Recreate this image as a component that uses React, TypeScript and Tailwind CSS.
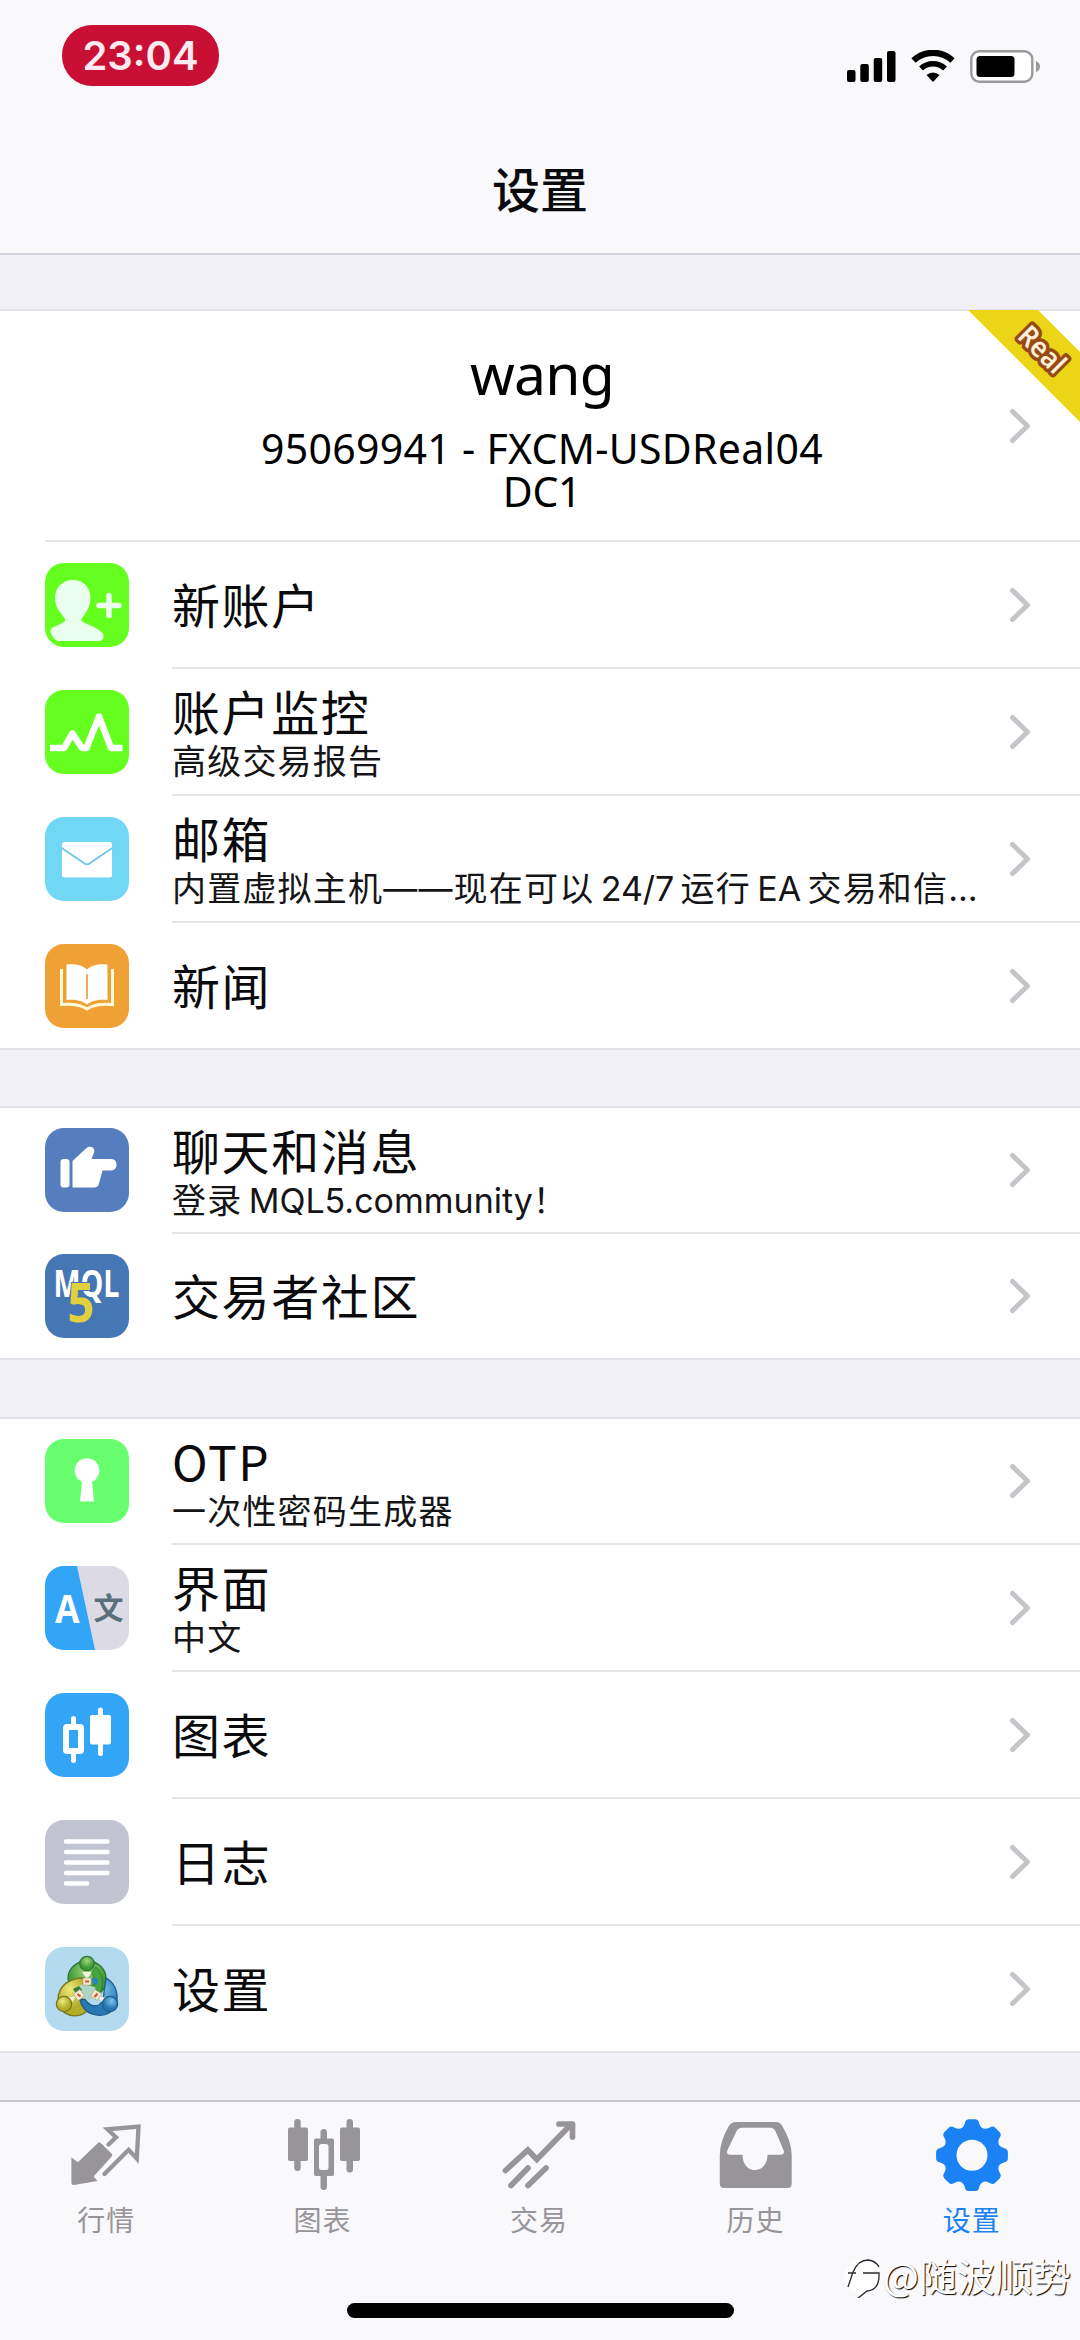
import { ReactNode } from "react";

type RowItem = {
  title: string;
  sub?: ReactNode;
  icon: ReactNode;
  height: string;
}

const Tile = ({ color, children }: { color: string; children: ReactNode }) => (
  <svg className="mb-[2px] w-[84px] h-[84px] shrink-0 rounded-[19px]" viewBox="0 0 84 84">
    <rect width="84" height="84" fill={color} />
    {children}
  </svg>
)

const Chevron = () => (
  <svg className="w-[22px] h-[36px] shrink-0" viewBox="0 0 22 36" fill="none" stroke="#c5c4c8" strokeWidth="5" strokeLinecap="round" strokeLinejoin="round">
    <path d="M3.500 3.500L18.500 18L3.500 32.500" />
  </svg>
)

const NewAccountIcon = () => (
  <Tile color="#64ff1e">
    <g fill="#ebffee">
      <path d="M28 17c10.500 0 17.500 7.500 17.500 18 0 8.500-4 14-8.500 20-1 1.500-1 2.500 0 3.500 4 2.500 21.500 8 21.500 14.500 0 3-2 5-5 5H14C9 78 5.500 71 5.500 67.500 5.500 64 15 62 19.500 58.500c1-1 1-2 0-3.500C14.500 49 10 43.500 10 35c0-10.500 7.500-18 18-18z" />
    </g>
    <path d="M64 32.500v20M54 42.500h20" stroke="#ebffee" strokeWidth="5.500" strokeLinecap="round" />
  </Tile>
)

const MonitorIcon = () => (
  <Tile color="#64ff1e">
    <path d="M5 58h14l8.500-14.500L37 58h4.500L54 26.500 66 58h11.500" fill="none" stroke="#fff" strokeWidth="6.500" strokeLinejoin="round" />
  </Tile>
)

const MailIcon = () => (
  <Tile color="#70d7f5">
    <rect x="17" y="25" width="50" height="35.500" rx="2.500" fill="#fff" />
    <path d="M16 30.500L39.500 46.500Q42 48.200 44.500 46.500L68 30.500" fill="none" stroke="#70c8e6" strokeWidth="2" />
  </Tile>
)

const NewsIcon = () => (
  <Tile color="#f0a135">
    <path d="M16.500 25v35.500c10-1 20 .5 25.500 4.500 5.500-4 15.500-5.500 25.500-4.500V25" fill="none" stroke="#fffbd8" strokeWidth="3" />
    <path d="M21.500 20.500c8-1 16 .5 20.500 5 4.500-4.500 12.500-6 20.500-5V56c-8-1-16 .5-20.500 4.500C37.500 56.500 29.500 55 21.500 56z" fill="#fff" />
    <path d="M42 30v25" stroke="#e8ae64" strokeWidth="2" />
  </Tile>
)

const ChatIcon = () => (
  <Tile color="#567dbe">
    <g fill="#fff">
      <rect x="15.500" y="31" width="9" height="28.500" rx="3" />
      <path d="M27.500 33L41 20.500c4-4 10-.5 8 4L46.500 31H66c7.500 0 7.500 11.500 0 11.500h-8.500l-3.500 13c-.8 3-2.500 4-5 4H27.500z" />
    </g>
  </Tile>
)

const MqlIcon = () => (
  <Tile color="#4577b5">
    <text x="8.500" y="42.500" textLength="66" lengthAdjust="spacingAndGlyphs" fontSize="37" fontWeight="700" fontFamily="Open Sans, sans-serif" fill="#fff">MQL</text>
    <text x="22.500" y="67.500" textLength="27" lengthAdjust="spacingAndGlyphs" fontSize="53" fontWeight="700" fontFamily="Open Sans, sans-serif" fill="#e3d03f" stroke="#4577b5" strokeWidth="2" paintOrder="stroke">5</text>
  </Tile>
)

const OtpIcon = () => (
  <Tile color="#68ff6e">
    <circle cx="42" cy="31.500" r="12.300" fill="#fff" />
    <path d="M37.500 38h9L49 62.500H35z" fill="#fff" />
  </Tile>
)

const LanguageIcon = () => (
  <Tile color="#dcdbe5">
    <path d="M0 0h32l18 84H0z" fill="#32a5f6" />
    <text x="10" y="57" textLength="24.500" lengthAdjust="spacingAndGlyphs" fontSize="39" fontWeight="700" fontFamily="Open Sans, sans-serif" fill="#fff">A</text>
    <text x="48.500" y="53" fontSize="30" fontWeight="700" fontFamily="Noto Sans CJK SC, sans-serif" fill="#5b6f7a">文</text>
  </Tile>
)

const ChartIcon = () => (
  <Tile color="#32a5f6">
    <g stroke="#fff" strokeWidth="5" strokeLinecap="round">
      <path d="M28.500 25.500v8M28.500 58v9.500M55.500 17v8M55.500 50v10.500" />
    </g>
    <rect x="21" y="34" width="15" height="24" rx="1" fill="none" stroke="#fff" strokeWidth="6" />
    <rect x="45" y="22" width="21" height="29.500" rx="2" fill="#fff" />
  </Tile>
)

const LogIcon = () => (
  <Tile color="#c3c4d2">
    <path d="M21 21.500h41.500M21 32h41.500M21 42.500h41.500M21 53h41.500M21 63.500h21" stroke="#fff" strokeWidth="4.500" strokeLinecap="round" />
  </Tile>
)

const MetaTraderIcon = () => (
  <Tile color="#b3daef">
    <defs>
      <radialGradient id="mtGreen" cx=".5" cy=".3"><stop offset="0" stopColor="#a2d884" /><stop offset="1" stopColor="#3d9a34" /></radialGradient>
      <radialGradient id="mtYellow" cx=".4" cy=".3"><stop offset="0" stopColor="#ecec7c" /><stop offset="1" stopColor="#b4ad28" /></radialGradient>
      <radialGradient id="mtBlue" cx=".6" cy=".3"><stop offset="0" stopColor="#7cc4ea" /><stop offset="1" stopColor="#2878b4" /></radialGradient>
    </defs>
    <path d="M23 31a19 17 0 0 1 38 0c0 8-3 14-9 17L40 44 24 36z" fill="url(#mtGreen)" stroke="#2f7430" strokeWidth="1.300" />
    <path d="M39 31C25 31 13 38 13 53c0 12 12 18 22 15 4-1 7-3 7-6l-5-12-2-9c1-3 5-4 8-3z" fill="url(#mtYellow)" stroke="#77751f" strokeWidth="1.300" />
    <path d="M61 31c8 4 12 13 11 23-2 12-14 17-25 13-6-2-11-8-12-14l5-1c3 6 9 8 14 6 4-3 5-8 5-13z" fill="url(#mtBlue)" stroke="#1f5b88" strokeWidth="1.300" />
    <path d="M51 20c8 7 8 20 3 29l-7-6c4-6 3-13-1-17z" fill="#47a53b" stroke="#2f7430" strokeWidth=".8" />
    <path d="M30 41l8-4 12 3 2 8-8 5-11-3z" fill="#aed4c5" />
    <path d="M28 42l6-3 3 4-5 5z" fill="#367f35" />
    <path d="M47 31h6v7l-5-1z" fill="#2e84b8" />
    <path d="M37 25l5 7 5-7M22 51l9-2-5 8M62 51l-9-2 5 8" fill="#f3f5df" />
    <g fill="#f6ead5" stroke="#a99e82" strokeWidth=".6">
      <rect x="38" y="31" width="8" height="7" />
      <rect x="30" y="44" width="8" height="8" transform="rotate(-35 34 48)" />
      <rect x="47" y="44" width="8" height="8" transform="rotate(30 51 48)" />
    </g>
    <path d="M40 34.500h4M32.500 47l3 2.500M49.500 50l3-3.500" stroke="#d2562c" strokeWidth="2.200" />
    <circle cx="42" cy="16.500" r="7.200" fill="url(#mtGreen)" stroke="#2f7430" strokeWidth="1.300" />
    <circle cx="19" cy="57" r="7.600" fill="url(#mtYellow)" stroke="#77751f" strokeWidth="1.300" />
    <circle cx="65" cy="57" r="7.600" fill="url(#mtBlue)" stroke="#1f5b88" strokeWidth="1.300" />
  </Tile>
)

// latin words sit tighter than the chinese around them
const Latin = ({ children }: { children: string }) => (
  <span className="tracking-normal">{children}</span>
)

const accountRows: RowItem[] = [
  { title: "新账户", icon: <NewAccountIcon />, height: "h-[127px]" },
  { title: "账户监控", sub: "高级交易报告", icon: <MonitorIcon />, height: "h-[127px]" },
  { title: "邮箱", sub: <>内置虚拟主机——现在可以 <Latin>24/7</Latin> 运行 <Latin>EA</Latin> 交易和信…</>, icon: <MailIcon />, height: "h-[127px]" },
  { title: "新闻", icon: <NewsIcon />, height: "h-[127px]" },
]

const communityRows: RowItem[] = [
  { title: "聊天和消息", sub: <>登录 <Latin>MQL5.community</Latin>！</>, icon: <ChatIcon />, height: "h-[126px]" },
  { title: "交易者社区", icon: <MqlIcon />, height: "h-[126px]" },
]

const settingsRows: RowItem[] = [
  { title: "OTP", sub: "一次性密码生成器", icon: <OtpIcon />, height: "h-[126px]" },
  { title: "界面", sub: "中文", icon: <LanguageIcon />, height: "h-[127px]" },
  { title: "图表", icon: <ChartIcon />, height: "h-[127px]" },
  { title: "日志", icon: <LogIcon />, height: "h-[127px]" },
  { title: "设置", icon: <MetaTraderIcon />, height: "h-[127px]" },
]

const Row = ({ item, last }: { item: RowItem; last: boolean }) => (
  <div className={`flex items-center pl-[45px] ${item.height}`}>
    {item.icon}
    <div className={`ml-[43px] flex h-full min-w-0 flex-1 items-center justify-between border-b-2 pr-[49px] ${last ? "border-transparent" : "border-[#e5e4e9]"}`}>
      <div className={item.sub ? "pt-[2px]" : "pb-[4px]"}>
        <p className="text-[48px] leading-[56px] tracking-[1.6px] text-[#0b0b0d]">{item.title}</p>
        {item.sub && (
          <p className="mt-[3px] whitespace-nowrap font-['Inter','Noto_Sans_CJK_SC',sans-serif] text-[34px] leading-[42px] tracking-[1.2px] text-[#151517] [word-spacing:-4.500px]">{item.sub}</p>
        )}
      </div>
      <Chevron />
    </div>
  </div>
)

const Rows = ({ items }: { items: RowItem[] }) => (
  <>
    {items.map((item, i) => <Row key={item.title} item={item} last={i === items.length - 1} />)}
  </>
)

const StatusBar = () => (
  <div className="flex h-[112px] items-start justify-between pl-[62px] pr-[39px] pt-[25px]">
    <div className="flex h-[61px] w-[157px] items-center justify-center rounded-[30px] bg-[#c91034] font-['Inter',sans-serif] text-[40px] font-semibold leading-none text-[#ffeaf0]">23:04</div>
    <div className="mt-[25px] flex items-start gap-[15px]">
      <svg className="w-[49px] h-[32px]" viewBox="0 0 49 32">
        <rect x="0" y="20" width="8.500" height="12" rx="2" />
        <rect x="13.300" y="14" width="8.500" height="18" rx="2" />
        <rect x="26.700" y="8" width="8.500" height="24" rx="2" />
        <rect x="40" y="1" width="8.500" height="31" rx="2" />
      </svg>
      <svg className="w-[44px] h-[32px]" viewBox="0 0 44 32" fill="none" stroke="#000">
        <path d="M2.500 10.500a28.500 28.500 0 0 1 39 0" strokeWidth="6.200" />
        <path d="M10 18.500a17.500 17.500 0 0 1 24 0" strokeWidth="5.500" />
        <path d="M22 32l-6.500-7a9.500 9.500 0 0 1 13 0z" fill="#000" stroke="none" />
      </svg>
      <svg className="w-[71px] h-[33px]" viewBox="0 0 71 33">
        <rect x="1.300" y="1.300" width="61" height="30.400" rx="8" fill="#fff" stroke="#9a999c" strokeWidth="2.400" />
        <rect x="6.500" y="6" width="38" height="21" rx="3.500" />
        <path d="M66 11q4 1.500 4 5.500t-4 5.500z" fill="#9a999c" />
      </svg>
    </div>
  </div>
)

const Account = () => (
  <div className="relative flex h-[231px] pl-[45px]">
    <div className="flex flex-1 items-center border-b-2 border-[#e5e4e9] pr-[49px]">
      <div className="flex-1 pb-[3px] pl-[30px] text-center font-['Noto_Sans',sans-serif] text-black">
        <p className="text-[57px] leading-[76px] tracking-[-0.800px]">wang</p>
        <p className="pt-[16px] text-[41px] leading-[43px] tracking-[0.300px]">95069941 - FXCM-USDReal04</p>
        <p className="text-[41px] leading-[43px] tracking-[-0.300px]">DC1</p>
      </div>
      <Chevron />
    </div>
    <svg className="absolute right-0 top-[-1px] h-[112px] w-[112px]" viewBox="0 0 112 112">
      <path d="M0 0h70l42 42v70z" fill="#ecd516" />
      <text x="74" y="50" transform="rotate(45 75 40)" textAnchor="middle" textLength="54" lengthAdjust="spacingAndGlyphs" fontFamily="Noto Sans, sans-serif" fontSize="28" fontWeight="600" fill="#fff1da" stroke="#984a14" strokeWidth="7" strokeLinejoin="round" paintOrder="stroke">Real</text>
    </svg>
  </div>
)

// eight teeth around the hub
const gearAngles = [0, 45, 90, 135, 180, 225, 270, 315]

const tabs = [
  {
    label: "行情",
    icon: <>
      <path d="M7.400 45.500L13.900 50.300 34 31Q35.300 29.500 36.700 31L47.500 41.500Q49 43 47.700 44.500L29.600 64.500 33.500 69 10 73Q7.400 73 7.400 70.500z" fill="currentColor" />
      <path d="M44.500 32.500L52 25.300 43.500 17.300 74.500 14.500 72.800 46.500 64.600 37.800 40.500 62" fill="none" stroke="currentColor" strokeWidth="4.300" strokeLinecap="round" />
    </>,
  },
  {
    label: "图表",
    icon: <>
      <g fill="currentColor">
        <rect x="7" y="15.500" width="20" height="33.500" rx="2" />
        <rect x="59" y="15.500" width="20" height="33.500" rx="2" />
        <rect x="13.200" y="7" width="6.500" height="52" rx="3.200" />
        <rect x="65.500" y="7" width="6.500" height="53.500" rx="3.200" />
        <rect x="39.500" y="17" width="6.500" height="61" rx="3.200" />
        <rect x="33" y="26.500" width="20" height="37.500" rx="2" />
      </g>
      <rect x="38" y="32" width="9.500" height="26" rx="2.500" fill="#f9f8fb" />
    </>,
  },
  {
    label: "交易",
    icon: <g fill="none" stroke="currentColor" strokeWidth="5.700" strokeLinecap="round">
      <path d="M8.500 58.500L30.900 38 39.800 47.500 74 12.500" />
      <path d="M62 12H75.500V25" strokeLinejoin="round" />
      <path d="M14 73.500L31 56M31 73.500L49 56" />
    </g>,
  },
  {
    label: "历史",
    icon: <path fillRule="evenodd" fill="currentColor" d="M23 10h40q4.500 0 6.500 4.500Q78.700 30 78.700 43v28.500q0 4.500-4.500 4.500H11.300q-4.500 0-4.500-4.500V43Q6.800 30 15.500 14.500 18 10 23 10zM29 15.700q-4 0-5.500 3.500L14.300 38.500q-1.200 4.200 2.700 4.200h12.500c0 20.500 25 20.500 25 0H67q4.900 0 3.700-4.200L62.500 19.200q-1.500-3.500-5-3.500z" />,
  },
  {
    label: "设置",
    active: true,
    icon: <>
      <circle cx="42" cy="43.200" r="28.500" fill="currentColor" />
      {gearAngles.map((a) => (
        <path key={a} d="M30 17Q34 15.500 35 10.500 36 7.300 39 7.300h6q3 0 4 3.200 1 5 5 6.500z" fill="currentColor" transform={`rotate(${a} 42 43.200)`} />
      ))}
      <circle cx="42" cy="43.200" r="15.500" fill="#f9f8fb" />
    </>,
  },
]

const TabBar = () => (
  <nav className="relative h-[240px] border-t-2 border-[#c9c8d0] bg-[#f9f8fb]">
    <div className="-ml-[2px] grid grid-cols-5 pt-[10px]">
      {tabs.map((tab) => (
        <div key={tab.label} className={`flex flex-col items-center ${tab.active ? "text-[#1a82f5]" : "text-[#979599]"}`}>
          <svg className="h-[84px] w-[84px]" viewBox="0 0 84 84">{tab.icon}</svg>
          <span className="mt-[3px] text-[28px] leading-[40px] tracking-[1px]">{tab.label}</span>
        </div>
      ))}
    </div>
    <div className="absolute left-[347px] top-[201px] h-[15px] w-[387px] rounded-full bg-black"></div>
    <div className="absolute right-[9px] top-[150px] flex items-center">
      <svg className="h-[46px] w-[40px]" viewBox="0 0 40 46">
        <circle cx="19" cy="24" r="17.500" fill="#fff" />
        <path d="M5 35L10 20Q15 8 25 8q8 1 11 7M5 21h8M20 21h16q1 17-12 18l-10 8" fill="none" stroke="#2b2b30" strokeWidth="1.300" />
      </svg>
      <span className="text-[38px] leading-[46px] text-white [text-shadow:1px_1px_1px_#000]">@随波顺势</span>
    </div>
  </nav>
)

const App = () => {
  return (
    <div className="flex h-[2340px] w-[1080px] flex-col overflow-hidden bg-[#f2f1f7] font-['Noto_Sans_CJK_SC',sans-serif]">
      <header className="h-[255px] border-b-2 border-[#d5d3dc] bg-[#f9f8fb]">
        <StatusBar />
        <h1 className="pt-[40px] text-center text-[48px] font-medium leading-[70px] text-[#0b0b0d]">设置</h1>
      </header>
      <section className="mt-[54px] border-y-2 border-[#e3e2e8] bg-white">
        <Account />
        <div className="-mb-[2px]"><Rows items={accountRows} /></div>
      </section>
      <section className="mt-[56px] border-y-2 border-[#e3e2e8] bg-white">
        <div className="-mb-[2px]"><Rows items={communityRows} /></div>
      </section>
      <section className="mt-[57px] border-y-2 border-[#e3e2e8] bg-white">
        <div className="-mb-[2px]"><Rows items={settingsRows} /></div>
      </section>
      <div className="mt-auto"><TabBar /></div>
    </div>
  )
}

export default App;
